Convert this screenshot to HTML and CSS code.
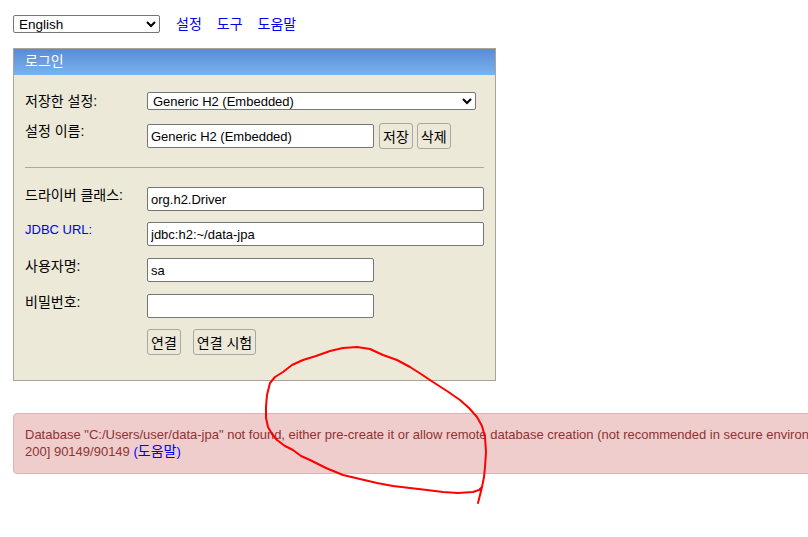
FILE: index.html
```html
<!DOCTYPE html>
<html lang="ko">
<head>
<meta charset="utf-8">
<title>H2 Console</title>
<link rel="stylesheet" href="styles.css">
</head>
<body>
<div class="page">
  <div class="topbar">
    <select class="lang">
      <option>English</option>
    </select>
    <a class="toplink ko" href="#">설정</a>
    <a class="toplink ko" href="#">도구</a>
    <a class="toplink ko" href="#">도움말</a>
  </div>

  <div class="login">
    <div class="login-head ko">로그인</div>
    <div class="login-body">
      <div class="row row-first">
        <div class="label ko">저장한 설정:</div>
        <div class="field">
          <select class="setting">
            <option>Generic H2 (Embedded)</option>
          </select>
        </div>
      </div>
      <div class="row row-name">
        <div class="label ko">설정 이름:</div>
        <div class="field field-buttons">
          <input class="input short" type="text" value="Generic H2 (Embedded)">
          <button class="btn ko">저장</button>
          <button class="btn ko">삭제</button>
        </div>
      </div>
      <div class="divider"></div>
      <div class="row row-driver">
        <div class="label ko">드라이버 클래스:</div>
        <div class="field"><input class="input long" type="text" value="org.h2.Driver"></div>
      </div>
      <div class="row row-url">
        <div class="label label-link">JDBC URL:</div>
        <div class="field"><input class="input long" type="text" value="jdbc:h2:~/data-jpa"></div>
      </div>
      <div class="row">
        <div class="label ko">사용자명:</div>
        <div class="field"><input class="input short" type="text" value="sa"></div>
      </div>
      <div class="row">
        <div class="label ko">비밀번호:</div>
        <div class="field"><input class="input short" type="password" value=""></div>
      </div>
      <div class="row row-actions">
        <div class="label"></div>
        <div class="field actions">
          <button class="btn ko">연결</button>
          <button class="btn ko">연결 시험</button>
        </div>
      </div>
    </div>
  </div>

  <div class="error">Database "C:/Users/user/data-jpa" not found, either pre-create it or allow remote database creation (not recommended in secure environments) [90149-<br>200] 90149/90149 <a class="help" href="#">(<span class="ko">도움말</span>)</a></div>
</div>

<svg class="scribble" width="808" height="537" viewBox="0 0 808 537" aria-hidden="true">
  <polyline fill="none" stroke="#ff0000" stroke-width="2" stroke-linejoin="round" stroke-linecap="round"
    points="478,503 480,495 482,487 484,477 485,467 486,452 485,437 482,426 477,417 469,408 460,400 447,391 433,382 421,374 410,367 397,360 383,355 370,349 357,347 343,348 330,351 316,356 303,360 292,365 283,372 275,377 270,383 267,395 266,407 266,418 268,427 272,434 277,440 285,446 293,450 301,456 310,460 326,468 343,475 360,479 377,483 393,486 410,488 427,490 443,492 458,493 473,492 479,490 482,487"/>
</svg>
</body>
</html>
```

FILE: styles.css
```css
html {
  overflow: hidden;
}

body {
  margin: 0;
  background: #ffffff;
  font-family: "Liberation Sans", "Noto Sans CJK KR", Arial, sans-serif;
  font-size: 13px;
  color: #000000;
}

.ko {
  font-size: 14px;
}

.page {
  padding: 15px 0 0 13px;
}

.topbar {
  display: flex;
  align-items: center;
  height: 18px;
}

.lang {
  width: 147px;
  height: 18px;
  margin: 0 16px 0 0;
  padding: 0 0 0 1px;
  border: 1px solid #767676;
  border-radius: 2px;
  background: #ffffff;
  font: 13.5px "Liberation Sans", "Noto Sans CJK KR", Arial, sans-serif;
  color: #000000;
}

.toplink {
  color: #0000ee;
  text-decoration: none;
  margin-right: 15px;
  line-height: 16px;
}

.login {
  width: 481px;
  margin-top: 15px;
  border: 1px solid #a8a597;
  background: #ece9d8;
}

.login-head {
  height: 26px;
  line-height: 24px;
  padding-left: 11px;
  color: #ffffff;
  background: linear-gradient(#5a8bd4, #79b3ef);
}

.login-body {
  padding: 17px 11px 25px 11px;
}

.row {
  display: grid;
  grid-template-columns: 122px 1fr;
  margin-top: 12px;
}

.row-first {
  margin-top: 0;
}

.row-name {
  margin-top: 13px;
}

.row-driver {
  margin-top: 0;
}

.row-url {
  margin-top: 11px;
}

.row-actions {
  margin-top: 11px;
}

.label {
  line-height: 16px;
  white-space: nowrap;
}

.label-link {
  color: #0000ee;
}

.row-first .label {
  padding-top: 1px;
}

.field {
  display: flex;
  align-items: center;
}

.setting {
  width: 329px;
  height: 18px;
  margin: 0;
  padding: 0 0 0 1px;
  border: 1px solid #767676;
  border-radius: 2px;
  background: #ffffff;
  font: 13px "Liberation Sans", "Noto Sans CJK KR", Arial, sans-serif;
  color: #000000;
}

.input {
  box-sizing: border-box;
  height: 24px;
  margin: 0;
  padding: 0 3px;
  border: 1px solid #767676;
  border-radius: 2px;
  background: #ffffff;
  font: 13px "Liberation Sans", "Noto Sans CJK KR", Arial, sans-serif;
  color: #000000;
}

.short {
  width: 227px;
}

.long {
  width: 337px;
}

.btn {
  box-sizing: border-box;
  height: 26px;
  margin: 0;
  padding: 0 3px;
  border: 1px solid #a9a8a0;
  border-radius: 3px;
  background: #ece9d8;
  font: 14px "Liberation Sans", "Noto Sans CJK KR", Arial, sans-serif;
  color: #000000;
}

.field-buttons .btn {
  margin-left: 5px;
}

.field-buttons .btn + .btn {
  margin-left: 4px;
}

.actions {
  gap: 12px;
}

.divider {
  height: 1px;
  margin: 18px 0 19px 0;
  background: #a9a9a3;
  width: 459px;
}

.error {
  box-sizing: border-box;
  width: 1100px;
  margin-top: 32px;
  padding: 12px 11px 13px 11px;
  border: 1px solid #dcb4b4;
  border-radius: 4px;
  background: #efcdcd;
  color: #8e3331;
  line-height: 17px;
  white-space: nowrap;
}

.help {
  color: #0000ee;
  text-decoration: none;
}

.scribble {
  position: absolute;
  top: 0;
  left: 0;
  pointer-events: none;
}
```
